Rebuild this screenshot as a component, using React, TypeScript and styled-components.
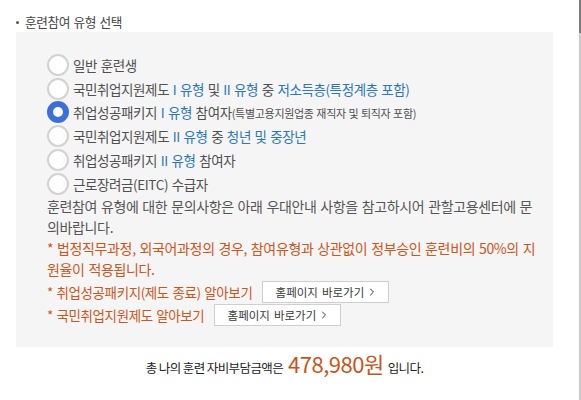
import React, {useState} from "react";
import styled, {createGlobalStyle, css} from "styled-components";
import {ChevronRight} from "lucide-react";

const GlobalStyle = createGlobalStyle`
  html, body {
    margin: 0;
    padding: 0;
    background: #fff;
  }

  body {
    font-family: "Noto Sans CJK KR", "Noto Sans", sans-serif;
    color: #555;
  }
`;

const Page = styled.div`
  display: flex;
  width: 581px;
  height: 400px;
  overflow: hidden;
`;

const Main = styled.div`
  width: 579px;
  padding: 12px 0 0 16px;
  box-sizing: border-box;
`;

const ScrollTrack = styled.div`
  width: 2px;
  height: 100%;
  background: #c9c9c9;
  display: flex;
  flex-direction: column;

  &::before {
    content: "";
    height: 33px;
    background: #7a7a7a;
  }
`;

const SectionTitle = styled.h3`
  margin: 0;
  display: flex;
  align-items: center;
  gap: 6px;
  font-size: 12.7px;
  font-weight: 400;
  letter-spacing: -0.4px;
  word-spacing: 1px;
  color: #444;
  line-height: 20px;

  &::before {
    content: "";
    width: 3px;
    height: 3px;
    border-radius: 50%;
    background: #555;
  }
`;

const Panel = styled.div`
  width: 537px;
  box-sizing: border-box;
  background: #f5f5f5;
  padding: 21px 10px 20px 31px;
  font-size: 13.5px;
  letter-spacing: -0.4px;
  word-spacing: 1px;
`;

const RadioList = styled.div`
  display: flex;
  flex-direction: column;
`;

const RadioRow = styled.label`
  height: 23.8px;
  display: flex;
  align-items: center;
  gap: 4px;
  cursor: pointer;
  white-space: nowrap;
`;

const RadioMark = styled.span<{ $checked?: boolean }>`
  flex: none;
  width: 22px;
  height: 22px;
  box-sizing: border-box;
  border-radius: 50%;
  background: #fff;
  border: 2px solid #d2d2d2;

  ${(p) =>
    p.$checked &&
    css`
      border: 6px solid #3c6fd9;
    `}
`;

const RadioText = styled.span`
  color: #505050;
  line-height: 20px;
`;

const Hl = styled.span`
  color: #2a78b8;
`;

const Small = styled.span`
  font-size: 11px;
  letter-spacing: -0.3px;
  word-spacing: 0.5px;
`;

const Notice = styled.p<{ $warn?: boolean }>`
  margin: 0;
  font-size: 14px;
  letter-spacing: -0.35px;
  line-height: 21px;
  color: ${(p) => (p.$warn ? "#cc561c" : "#555")};
  padding-right: 4px;
`;

const LinkRow = styled.div`
  display: flex;
  align-items: center;
  gap: 10px;
  height: 23.8px;
  color: #cc561c;
  white-space: nowrap;
`;

const GoButton = styled.button`
  width: 127px;
  height: 22px;
  display: flex;
  align-items: center;
  justify-content: center;
  gap: 2px;
  background: #fff;
  border: 1px solid #cfcfcf;
  font-family: "Noto Sans CJK KR", sans-serif;
  font-size: 11.5px;
  letter-spacing: 0;
  word-spacing: 1.5px;
  color: #3a3a3a;
  padding: 0 0 0 2px;
  cursor: pointer;
`;

const Total = styled.div`
  width: 537px;
  display: flex;
  align-items: baseline;
  justify-content: center;
  gap: 5px;
  font-size: 12.5px;
  letter-spacing: -0.6px;
  color: #222;
`;

const Amount = styled.strong`
  font-size: 22px;
  font-weight: 400;
  letter-spacing: -0.5px;
  color: #c9541c;
  margin-right: -1px;
`;

const options: React.ReactNode[] = [
    <>일반 훈련생</>,
    <>국민취업지원제도 <Hl>I 유형</Hl> 및 <Hl>II 유형</Hl> 중 <Hl>저소득층(특정계층 포함)</Hl></>,
    <>취업성공패키지 <Hl>I 유형</Hl> 참여자<Small>(특별고용지원업종 재직자 및 퇴직자 포함)</Small></>,
    <>국민취업지원제도 <Hl>II 유형</Hl> 중 <Hl>청년 및 중장년</Hl></>,
    <>취업성공패키지 <Hl>II 유형</Hl> 참여자</>,
    <>근로장려금(EITC) 수급자</>,
];

export default function App() {
    const [selected, setSelected] = useState<number>(2);

    return (
        <Page>
            <GlobalStyle/>
            <Main>
                <SectionTitle>훈련참여 유형 선택</SectionTitle>
                <Panel>
                    <RadioList>
                        {options.map((label, i) => (
                            <RadioRow key={i} onClick={() => setSelected(i)}>
                                <RadioMark $checked={selected === i}/>
                                <RadioText>{label}</RadioText>
                            </RadioRow>
                        ))}
                    </RadioList>
                    <Notice>
                        훈련참여 유형에 대한 문의사항은 아래 우대안내 사항을 참고하시어 관할고용센터에 문의바랍니다.
                    </Notice>
                    <Notice $warn>
                        * 법정직무과정, 외국어과정의 경우, 참여유형과 상관없이 정부승인 훈련비의 50%의 지원율이 적용됩니다.
                    </Notice>
                    <LinkRow>
                        * 취업성공패키지(제도 종료) 알아보기
                        <GoButton>홈페이지 바로가기 <ChevronRight size={12} strokeWidth={2}/></GoButton>
                    </LinkRow>
                    <LinkRow>
                        * 국민취업지원제도 알아보기
                        <GoButton>홈페이지 바로가기 <ChevronRight size={12} strokeWidth={2}/></GoButton>
                    </LinkRow>
                </Panel>
                <Total>
                    총 나의 훈련 자비부담금액은 <Amount>478,980원</Amount> 입니다.
                </Total>
            </Main>
            <ScrollTrack/>
        </Page>
    );
}
